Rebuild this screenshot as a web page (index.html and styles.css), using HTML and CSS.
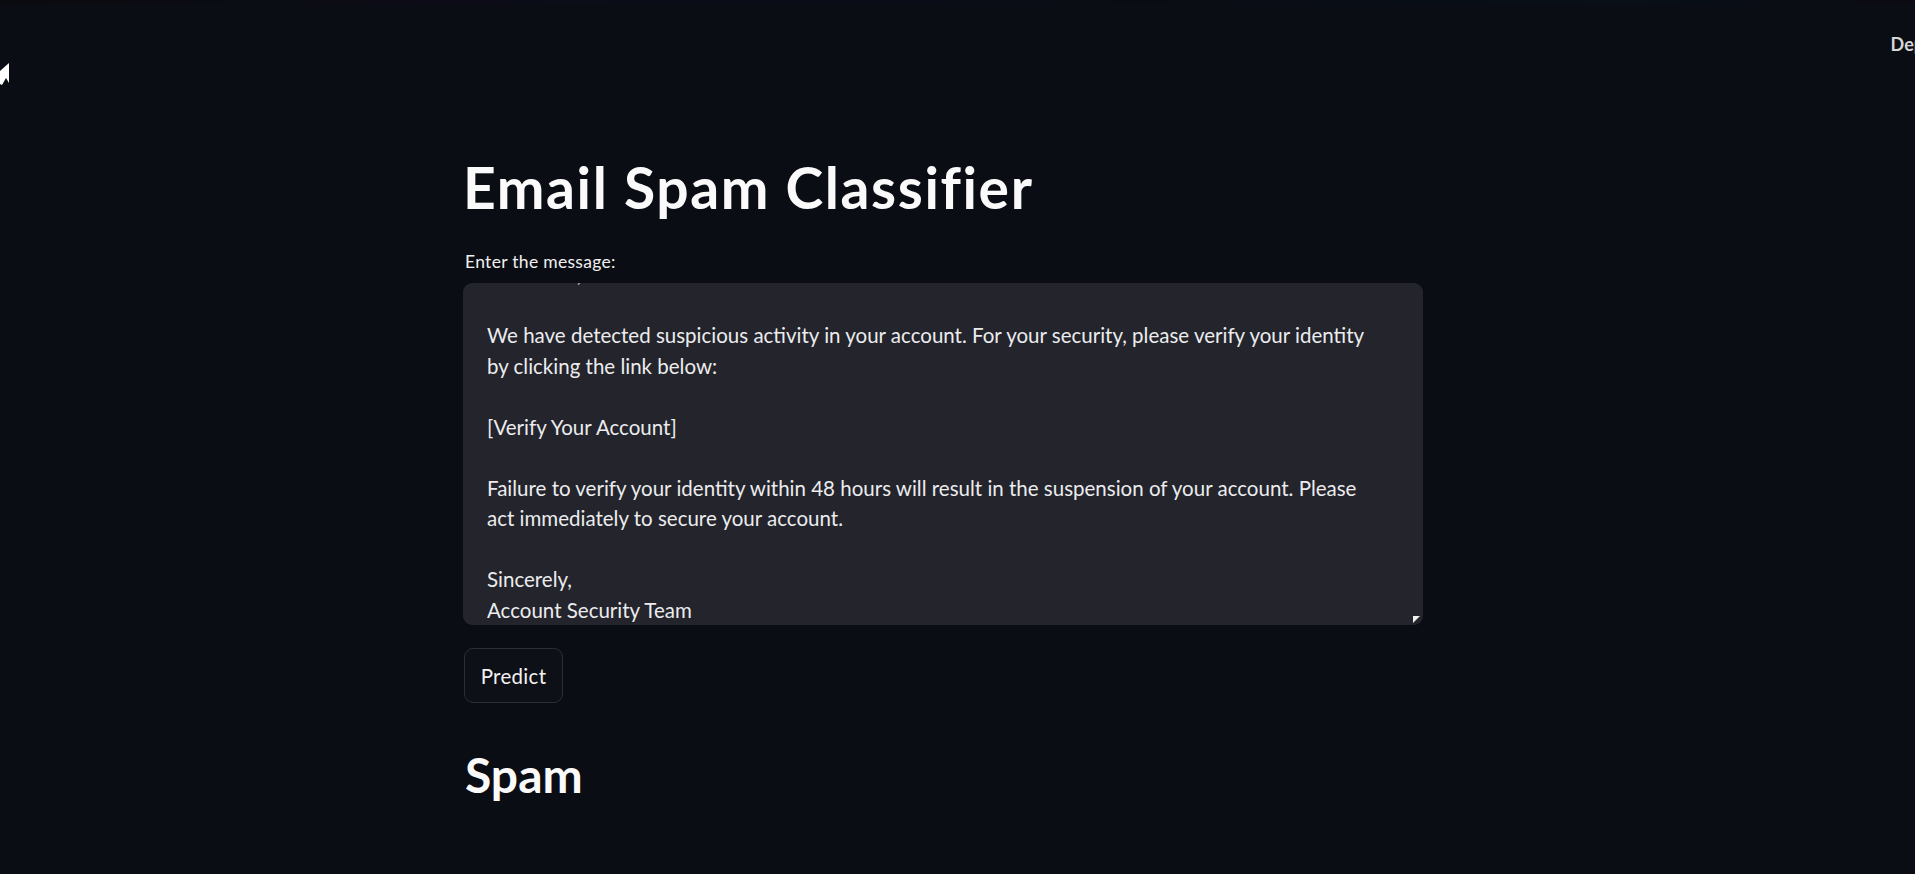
FILE: index.html
```html
<!DOCTYPE html>
<html lang="en">
<head>
<meta charset="utf-8">
<title>Email Spam Classifier</title>
<link rel="stylesheet" href="styles.css">
</head>
<body>
<div class="decoration"></div>
<header class="header">
  <svg class="cursor" width="10" height="24" viewBox="0 0 10 24" aria-hidden="true"><polygon points="9,0 9,20 6,15 2,22 0,21 0,8" fill="#ffffff"/></svg>
  <span class="deploy">Deploy</span>
</header>
<main class="main">
  <h1 class="title">Email Spam Classifier</h1>
  <label class="label">Enter the message:</label>
  <div class="textarea-wrap">
    <div class="textarea" role="textbox" aria-multiline="true"><div class="textarea-content">Dear User,

We have detected suspicious activity in your account. For your security, please verify your identity
by clicking the link below:

[Verify Your Account]

Failure to verify your identity within 48 hours will result in the suspension of your account. Please
act immediately to secure your account.

Sincerely,
Account Security Team</div></div>
  </div>
  <button class="btn">Predict</button>
  <h2 class="result">Spam</h2>
</main>
</body>
</html>
```

FILE: styles.css
```css
* { box-sizing: border-box; }
html, body {
  margin: 0;
  padding: 0;
  height: 874px;
  overflow: hidden;
  background: #0b0d14;
  color: #fafafa;
  font-family: Lato, "Noto Sans", sans-serif;
}
.decoration {
  height: 4px;
  background: linear-gradient(90deg, #0a0b0e 0%, #0d0c1a 30%, #0a0c14 60%, #081018 85%, #0c0a12 100%);
}
.header {
  height: 84px;
  display: flex;
  align-items: center;
  justify-content: space-between;
}
.cursor {
  margin-top: 58px;
}
.deploy {
  font-size: 18px;
  font-weight: 700;
  color: #d6d6d8;
  margin-right: -33px;
  margin-top: -5px;
  white-space: nowrap;
}
.main {
  margin-left: 463px;
  width: 960px;
  display: flex;
  flex-direction: column;
  align-items: flex-start;
}
.title {
  margin: 65px 0 0 0;
  font-size: 57px;
  line-height: 68px;
  letter-spacing: 1.6px;
  font-weight: 700;
  color: #fafafa;
}
.label {
  margin-top: 30px;
  margin-left: 2px;
  font-size: 17.5px;
  line-height: 21px;
  letter-spacing: 0.3px;
  color: #f0f0f0;
}
.textarea-wrap {
  position: relative;
  margin-top: 11px;
  width: 960px;
}
.textarea {
  height: 342px;
  background: #23242c;
  border-radius: 9px;
  padding: 0 24px;
  overflow: hidden;
  display: flex;
  flex-direction: column;
  justify-content: flex-end;
}
.textarea-content {
  white-space: pre;
  font-size: 20.5px;
  line-height: 30.5px;
  color: #ececee;
}
.textarea-wrap::after {
  content: "";
  position: absolute;
  right: 3px;
  bottom: 2px;
  width: 0;
  height: 0;
  border-top: 7px solid #f0f0f0;
  border-right: 7px solid transparent;
}
.btn {
  margin-top: 23px;
  margin-left: 1px;
  width: 99px;
  height: 55px;
  background: #0e1017;
  border: 1px solid #2c2e36;
  border-radius: 9px;
  color: #f2f2f2;
  font-family: Lato, "Noto Sans", sans-serif;
  font-size: 20.5px;
  letter-spacing: 0.3px;
  padding: 0;
}
.result {
  margin: 43px 0 0 2px;
  font-size: 48px;
  line-height: 58px;
  font-weight: 700;
  color: #fafafa;
}
```
